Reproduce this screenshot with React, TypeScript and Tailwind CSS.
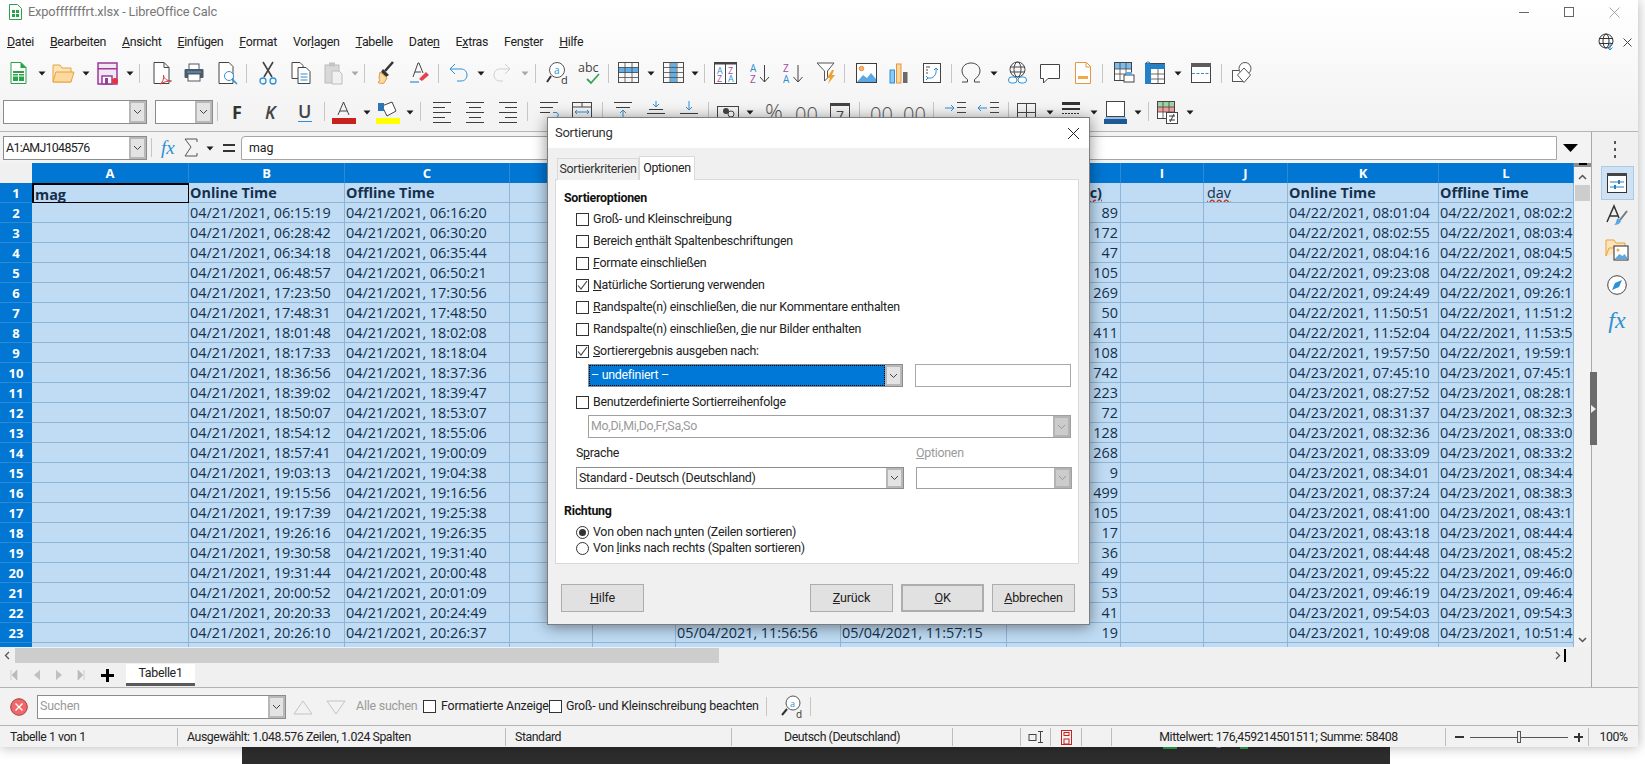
import React from "react";

const ui = "[font-family:'Roboto',sans-serif]";
const sheetFont = "[font-family:'Open_Sans',sans-serif]";

// Data of the sheet
const rows: [string, string, string, string, string][] = [
  ["04/21/2021, 06:15:19", "04/21/2021, 06:16:20", "89", "04/22/2021, 08:01:04", "04/22/2021, 08:02:25"],
  ["04/21/2021, 06:28:42", "04/21/2021, 06:30:20", "172", "04/22/2021, 08:02:55", "04/22/2021, 08:03:47"],
  ["04/21/2021, 06:34:18", "04/21/2021, 06:35:44", "47", "04/22/2021, 08:04:16", "04/22/2021, 08:04:53"],
  ["04/21/2021, 06:48:57", "04/21/2021, 06:50:21", "105", "04/22/2021, 09:23:08", "04/22/2021, 09:24:28"],
  ["04/21/2021, 17:23:50", "04/21/2021, 17:30:56", "269", "04/22/2021, 09:24:49", "04/22/2021, 09:26:11"],
  ["04/21/2021, 17:48:31", "04/21/2021, 17:48:50", "50", "04/22/2021, 11:50:51", "04/22/2021, 11:51:22"],
  ["04/21/2021, 18:01:48", "04/21/2021, 18:02:08", "411", "04/22/2021, 11:52:04", "04/22/2021, 11:53:50"],
  ["04/21/2021, 18:17:33", "04/21/2021, 18:18:04", "108", "04/22/2021, 19:57:50", "04/22/2021, 19:59:10"],
  ["04/21/2021, 18:36:56", "04/21/2021, 18:37:36", "742", "04/23/2021, 07:45:10", "04/23/2021, 07:45:19"],
  ["04/21/2021, 18:39:02", "04/21/2021, 18:39:47", "223", "04/23/2021, 08:27:52", "04/23/2021, 08:28:15"],
  ["04/21/2021, 18:50:07", "04/21/2021, 18:53:07", "72", "04/23/2021, 08:31:37", "04/23/2021, 08:32:30"],
  ["04/21/2021, 18:54:12", "04/21/2021, 18:55:06", "128", "04/23/2021, 08:32:36", "04/23/2021, 08:33:05"],
  ["04/21/2021, 18:57:41", "04/21/2021, 19:00:09", "268", "04/23/2021, 08:33:09", "04/23/2021, 08:33:20"],
  ["04/21/2021, 19:03:13", "04/21/2021, 19:04:38", "9", "04/23/2021, 08:34:01", "04/23/2021, 08:34:40"],
  ["04/21/2021, 19:15:56", "04/21/2021, 19:16:56", "499", "04/23/2021, 08:37:24", "04/23/2021, 08:38:30"],
  ["04/21/2021, 19:17:39", "04/21/2021, 19:25:38", "105", "04/23/2021, 08:41:00", "04/23/2021, 08:43:12"],
  ["04/21/2021, 19:26:16", "04/21/2021, 19:26:35", "17", "04/23/2021, 08:43:18", "04/23/2021, 08:44:40"],
  ["04/21/2021, 19:30:58", "04/21/2021, 19:31:40", "36", "04/23/2021, 08:44:48", "04/23/2021, 08:45:20"],
  ["04/21/2021, 19:31:44", "04/21/2021, 20:00:48", "49", "04/23/2021, 09:45:22", "04/23/2021, 09:46:00"],
  ["04/21/2021, 20:00:52", "04/21/2021, 20:01:09", "53", "04/23/2021, 09:46:19", "04/23/2021, 09:46:41"],
  ["04/21/2021, 20:20:33", "04/21/2021, 20:24:49", "41", "04/23/2021, 09:54:03", "04/23/2021, 09:54:30"],
  ["04/21/2021, 20:26:10", "04/21/2021, 20:26:37", "19", "04/23/2021, 10:49:08", "04/23/2021, 10:51:40"],
];

const colNames = ["A", "B", "C", "D", "E", "F", "G", "H", "I", "J", "K", "L"];
const cell =
  "border-r border-b border-[#8fb5d6] overflow-hidden whitespace-nowrap pl-[1px] text-[14.4px] leading-[19px] text-[#14304d]";

// Toolbar helpers
const Ic = ({ w, h = 24, c = "", children }: { w: number; h?: number; c?: string; children: React.ReactNode }) => (
  <svg width={w} height={h} viewBox={`0 0 ${w} ${h}`} fill="none" className={`shrink-0 overflow-visible ${c}`}>
    {children}
  </svg>
);
const Arrow = ({ c = "", light }: { c?: string; light?: boolean }) => (
  <Ic w={8} c={c}>
    <path d="M0.5 10.5h7L4 14.5z" fill={light ? "#a8a8a8" : "#1c1c1c"} />
  </Ic>
);
const Sep = ({ c = "" }: { c?: string }) => <span className={`w-px h-[19px] bg-[#c6c6c6] shrink-0 ${c}`} />;

const GridIcon = ({ band }: { band: "row" | "col" }) => (
  <>
    {band === "row" ? <rect x="1" y="6" width="20" height="6" fill="#62aee6" /> : <rect x="7.5" y="2" width="6" height="20" fill="#62aee6" />}
    <rect x="0.5" y="1.5" width="20" height="20" stroke="#4a4a4a" />
    <path d="M0.5 6.5h20M0.5 11.5h20M0.5 16.5h20M7 1.5v20M14 1.5v20" stroke="#4a4a4a" strokeWidth=".8" />
  </>
);

const Lines = ({ kind }: { kind: "l" | "c" | "r" }) => {
  const d = {
    l: "M0 2.5h18M0 7.5h12M0 12.5h18M0 17.5h12M0 22.5h18",
    c: "M0 2.5h18M3 7.5h12M0 12.5h18M3 17.5h12M0 22.5h18",
    r: "M0 2.5h18M6 7.5h12M0 12.5h18M6 17.5h12M0 22.5h18",
  }[kind];
  return <path d={d} stroke="#3d3d3d" />;
};

const Check = ({ on, c = "" }: { on?: boolean; c?: string }) => (
  <span className={`w-[13px] h-[13px] border border-[#333] bg-white flex items-center justify-center shrink-0 ${c}`}>
    {on && (
      <svg width="11" height="11" viewBox="0 0 11 11" fill="none">
        <path d="M1 5.5l3 3.5 6-8" stroke="#444" strokeWidth="1.1" />
      </svg>
    )}
  </span>
);

const Chevron = ({ color = "#444" }: { color?: string }) => (
  <svg width="9" height="6" viewBox="0 0 9 6" fill="none">
    <path d="M1 1l3.5 3.5L8 1" stroke={color} />
  </svg>
);

const Combo = ({
  width,
  height = "h-[23px]",
  text,
  textClass = "text-[#222]",
  disabled,
  focus,
  c = "",
}: {
  width: string;
  height?: string;
  text?: string;
  textClass?: string;
  disabled?: boolean;
  focus?: boolean;
  c?: string;
}) => (
  <div className={`flex shrink-0 border ${disabled ? "border-[#a0a0a0]" : "border-[#8c8c8c]"} ${focus ? "bg-[#0078d7]" : "bg-white"} ${width} ${height} ${c}`}>
    <div className={`flex-1 pl-[2px] flex items-center whitespace-nowrap overflow-hidden ${focus ? "text-white outline-1 outline-dotted outline-black -outline-offset-1" : textClass}`}>
      {text}
    </div>
    <div className={`w-[17px] flex items-center justify-center border-2 ${disabled ? "bg-[#cccccc] border-[#b4b4b4]" : "bg-[#e3e3e3] border-[#b8b8b8]"}`}>
      <Chevron color={disabled ? "#999" : "#444"} />
    </div>
  </div>
);

const Btn = ({ children, c = "" }: { children: React.ReactNode; c?: string }) => (
  <button className={`w-[83px] h-[28px] bg-[#e1e1e1] border border-[#adadad] text-[12.6px] tracking-[-0.2px] text-[#222] ${ui} ${c}`}>{children}</button>
);

function DialogOption({ on, children }: { on?: boolean; children: React.ReactNode }) {
  return (
    <div className="h-[22px] flex items-center ml-[20px]">
      <Check on={on} />
      <span className="ml-[4px] pt-[1px] text-[#222]">{children}</span>
    </div>
  );
}

const Radio = ({ on, children }: { on?: boolean; children: React.ReactNode }) => (
  <div className="h-[16px] flex items-center ml-[20px]">
    <span className="w-[13px] h-[13px] rounded-full border border-[#333] bg-white flex items-center justify-center shrink-0">
      {on && <span className="w-[7px] h-[7px] rounded-full bg-[#333]" />}
    </span>
    <span className="ml-[4px] pt-[1px] text-[#222]">{children}</span>
  </div>
);

const SortDialog = () => (
  <div className={`absolute left-[547px] top-[117px] z-20 w-[543px] h-[508px] border border-[#7d7d7d] bg-[#f0f0f0] shadow-[0_2px_14px_rgba(0,0,0,0.45)] flex flex-col text-[12.4px] tracking-[-0.27px] ${ui}`}>
    <div className="h-[30px] bg-white flex items-center justify-between shrink-0">
      <span className="ml-[7px] text-[13px] text-[#333]">Sortierung</span>
      <svg width="13" height="13" viewBox="0 0 13 13" fill="none" className="mr-[9px]">
        <path d="M1 1l11 11M12 1L1 12" stroke="#222" />
      </svg>
    </div>
    <div className="flex items-end ml-[9px] mt-[8px] h-[24px] shrink-0 relative z-10">
      <div className="w-[82px] h-[22px] bg-[#f0f0f0] border border-b-0 border-[#d9d9d9] flex items-center justify-center text-[#333]">Sortierkriterien</div>
      <div className="w-[56px] h-[24px] bg-white border border-b-0 border-[#d9d9d9] flex items-center justify-center text-[#222]">Optionen</div>
    </div>
    <div className="ml-[7px] w-[524px] h-[385px] -mt-px bg-white border border-[#d9d9d9] pl-[8px] pt-[8px] shrink-0">
      <div className="h-[20px] flex items-center font-bold text-[#111]">Sortieroptionen</div>
      <div className="-ml-[8px]">
        <DialogOption>Groß- und Kleinschrei<u>b</u>ung</DialogOption>
        <DialogOption>Bereich <u>e</u>nthält Spaltenbeschriftungen</DialogOption>
        <DialogOption><u>F</u>ormate einschließen</DialogOption>
        <DialogOption on><u>N</u>atürliche Sortierung verwenden</DialogOption>
        <DialogOption><u>R</u>andspalte(n) einschließen, die nur Kommentare enthalten</DialogOption>
        <DialogOption>Randspalte(n) einschließen, <u>d</u>ie nur Bilder enthalten</DialogOption>
        <DialogOption on><u>S</u>ortierergebnis ausgeben nach:</DialogOption>
      </div>
      <div className="flex mt-[2px] ml-[24px]">
        <Combo width="w-[315px]" text="– undefiniert –" focus />
        <div className="w-[156px] h-[23px] ml-[12px] border border-[#a9a9a9] bg-white" />
      </div>
      <div className="-ml-[8px] mt-[4px]">
        <DialogOption>Benutzerdefinierte Sortierreihenfolge</DialogOption>
      </div>
      <Combo width="w-[483px]" text="Mo,Di,Mi,Do,Fr,Sa,So" textClass="text-[#9a9a9a]" disabled c="mt-[2px] ml-[24px]" />
      <div className="flex mt-[6px] ml-[12px] h-[18px] items-center">
        <span className="w-[340px] text-[#222]">S<u>p</u>rache</span>
        <span className="text-[#9a9a9a]"><u>O</u>ptionen</span>
      </div>
      <div className="flex mt-[5px] ml-[12px]">
        <Combo width="w-[328px]" height="h-[22px]" text="Standard - Deutsch (Deutschland)" />
        <Combo width="w-[156px]" height="h-[22px]" disabled c="ml-[12px]" />
      </div>
      <div className="h-[18px] mt-[13px] flex items-center font-bold text-[#111]">Richtung</div>
      <div className="-ml-[8px] mt-[4px]">
        <Radio on>Von oben nach <u>u</u>nten (Zeilen sortieren)</Radio>
        <Radio>Von <u>l</u>inks nach rechts (Spalten sortieren)</Radio>
      </div>
    </div>
    <div className="flex mt-[20px] ml-[13px]">
      <Btn><u>H</u>ilfe</Btn>
      <Btn c="ml-[166px]"><u>Z</u>urück</Btn>
      <Btn c="ml-[8px] border-2 border-[#0078d7]"><u>O</u>K</Btn>
      <Btn c="ml-[8px]"><u>A</u>bbrechen</Btn>
    </div>
  </div>
);

const Toolbar1 = () => (
  <div className="h-[30px] flex items-center shrink-0">
    <Ic w={17} c="ml-[10px]">
      <path d="M1 1.5h10l5 5v16H1z" fill="#fff" stroke="#2aa14a" />
      <path d="M10.5 1v6h6z" fill="#2aa14a" />
      <rect x="3" y="10" width="11" height="10" fill="#2aa14a" />
      <path d="M3 15h11M8.5 12v8M3 12.5h11" stroke="#fff" />
    </Ic>
    <Arrow c="ml-[11px]" />
    <Ic w={23} c="ml-[6px]">
      <path d="M1 21V4h7l2 3h9v14z" fill="#fde3ba" stroke="#e8a33d" />
      <path d="M1 21l3-10h18l-3 10z" fill="#fdd9a0" stroke="#e8a33d" />
    </Ic>
    <Arrow c="ml-[7px]" />
    <Ic w={21} c="ml-[7px]">
      <path d="M1 2h19v21H1z" fill="#f3e6f3" stroke="#9b3a9b" strokeWidth="1.5" />
      <rect x="1" y="7" width="19" height="1.500" fill="#9b3a9b" />
      <path d="M5 23v-8h10v8z" stroke="#9b3a9b" strokeWidth="1.5" fill="#fff" />
      <rect x="8" y="17" width="3" height="6" fill="#9b3a9b" />
      <circle cx="18" cy="20" r="3" fill="#e8323c" />
    </Ic>
    <Arrow c="ml-[8px]" />
    <Sep c="ml-[5px]" />
    <Ic w={19} c="ml-[13px]">
      <path d="M1 1.500h10l5 5v16H1z" fill="#fff" stroke="#444" />
      <path d="M11 1.500v5h5" stroke="#444" />
      <path d="M7 23c3-2 4-5 3.500-9 0 3 3 6 8 6-4 0-8 1-11.500 3z" stroke="#d03c3c" />
    </Ic>
    <Ic w={20} c="ml-[12px]">
      <rect x="5" y="3" width="10" height="6" fill="#fff" stroke="#4d5b68" />
      <rect x="0.500" y="8" width="19" height="9" rx="1" fill="#4d5b68" />
      <rect x="4" y="13" width="12" height="7" fill="#fff" stroke="#4d5b68" />
      <path d="M3 11h14" stroke="#63a9e0" />
    </Ic>
    <Ic w={20} c="ml-[14px]">
      <path d="M1 1.500h10l4 4v17H1z" fill="#fff" stroke="#444" />
      <circle cx="11" cy="15" r="4.500" fill="#fff" stroke="#2d8fd5" />
      <path d="M14 18l5 5" stroke="#2d8fd5" strokeWidth="1.500" />
    </Ic>
    <Sep c="ml-[8px]" />
    <Ic w={18} c="ml-[12px]">
      <path d="M4 1l9 15M14 1L5 16" stroke="#444" strokeWidth="1.600" />
      <circle cx="4" cy="20" r="3" stroke="#2d8fd5" strokeWidth="1.300" />
      <circle cx="14" cy="20" r="3" stroke="#2d8fd5" strokeWidth="1.300" />
    </Ic>
    <Ic w={20} c="ml-[14px]">
      <path d="M1 1.500h8l3 3v13H1z" fill="#fff" stroke="#444" />
      <path d="M7 6.500h8l4 4v12H7z" fill="#fff" stroke="#444" />
      <path d="M9.500 13h7M9.500 16h7M9.500 19h7" stroke="#2d8fd5" />
    </Ic>
    <Ic w={19} c="ml-[13px]">
      <rect x="1" y="4" width="14" height="18" fill="#d8d8d8" stroke="#bcbcbc" />
      <rect x="5" y="1.500" width="6" height="4" fill="#c4c4c4" />
      <path d="M8 10h7l3 3v10H8z" fill="#f0f0f0" stroke="#bcbcbc" />
    </Ic>
    <Arrow light c="ml-[8px]" />
    <Sep c="ml-[5px]" />
    <Ic w={17} c="ml-[12px]">
      <path d="M16 1L8 10" stroke="#333" strokeWidth="2.500" />
      <path d="M6 8l6 6-3 2-5-5z" fill="#333" />
      <path d="M3 11l7 6-3 5c-3 1-6 0-6-1 2 0 2-2 1-4z" fill="#fbd9a4" stroke="#e8963d" />
    </Ic>
    <Ic w={19} c="ml-[16px]">
      <path d="M3 16L8 2h1l4 10M5 11h6" stroke="#444" />
      <path d="M9 18l7-7 3 3-7 6z" fill="#e6424d" />
      <path d="M0 21h9" stroke="#2d8fd5" strokeWidth="1.200" />
    </Ic>
    <Sep c="ml-[9px]" />
    <Ic w={19} c="ml-[10px]">
      <path d="M6 3L1 8l5 5" stroke="#2d8fd5" />
      <path d="M1 8h11c4 0 6 3 6 6s-2 6-6 6H8" stroke="#2d8fd5" />
    </Ic>
    <Arrow c="ml-[9px]" />
    <Ic w={18} c="ml-[8px]">
      <path d="M12 3l5 5-5 5" stroke="#cfcfcf" />
      <path d="M17 8H7c-4 0-6 3-6 6s2 6 6 6h3" stroke="#cfcfcf" />
    </Ic>
    <Arrow light c="ml-[10px]" />
    <Sep c="ml-[6px]" />
    <Ic w={22} c="ml-[10px]">
      <circle cx="11" cy="9" r="7.500" fill="#fff" stroke="#555" />
      <path d="M5 15L1 21" stroke="#333" strokeWidth="2" />
      <text x="8" y="12.500" fontSize="10" fill="#2d8fd5" fontFamily="Open Sans">a</text>
      <text x="15" y="23" fontSize="11" fill="#333" fontFamily="Open Sans">d</text>
    </Ic>
    <Ic w={22} c="ml-[10px]">
      <text x="0" y="11" fontSize="12.500" fill="#444" fontFamily="Open Sans">abc</text>
      <path d="M9 18l4 4 8-9" stroke="#3aa655" strokeWidth="1.800" />
    </Ic>
    <Sep c="ml-[8px]" />
    <Ic w={21} c="ml-[9px]"><GridIcon band="row" /></Ic>
    <Arrow c="ml-[8px]" />
    <Ic w={21} c="ml-[8px]"><GridIcon band="col" /></Ic>
    <Arrow c="ml-[7px]" />
    <Sep c="ml-[5px]" />
    <Ic w={23} c="ml-[9px]">
      <rect x="0.500" y="1.500" width="22" height="21" stroke="#444" fill="#fff" />
      <rect x="0.500" y="1" width="22" height="2.500" fill="#444" />
      <path d="M11.500 3v19" stroke="#444" />
      <text x="3" y="12.500" fontSize="9" fontFamily="Open Sans" fill="#2d8fd5">A</text>
      <text x="3" y="21" fontSize="9" fontFamily="Open Sans" fill="#a34ca3">Z</text>
      <text x="14" y="12.500" fontSize="9" fontFamily="Open Sans" fill="#a34ca3">Z</text>
      <text x="14" y="21" fontSize="9" fontFamily="Open Sans" fill="#2d8fd5">A</text>
    </Ic>
    <Ic w={21} c="ml-[12px]">
      <text x="1" y="11" fontSize="10" fontFamily="Open Sans" fill="#2d8fd5">A</text>
      <text x="1" y="22" fontSize="10" fontFamily="Open Sans" fill="#a34ca3">Z</text>
      <path d="M15.500 4v17M11 16l4.500 5 4.500-5" stroke="#444" />
    </Ic>
    <Ic w={22} c="ml-[12px]">
      <text x="1" y="11" fontSize="10" fontFamily="Open Sans" fill="#a34ca3">Z</text>
      <text x="1" y="22" fontSize="10" fontFamily="Open Sans" fill="#2d8fd5">A</text>
      <path d="M16 4v17M11.500 16l4.500 5 4.500-5" stroke="#444" />
    </Ic>
    <Ic w={20} c="ml-[12px]">
      <path d="M1 2h17l-6.500 8v7l-3 3v-10z" fill="#fff" stroke="#555" />
      <path d="M16 9l-5 8h3l-2 6 7-9h-3l2-5z" fill="#f0a030" />
    </Ic>
    <Sep c="ml-[8px]" />
    <Ic w={21} c="ml-[11px]">
      <rect x="0.500" y="2.500" width="20" height="19" stroke="#3d3d3d" fill="#fff" />
      <circle cx="5.500" cy="7.500" r="2.300" fill="#f6b26b" stroke="#e8963d" />
      <path d="M1 21l6-7 4 3 4-5 5 6v3z" fill="#5aa9e6" />
    </Ic>
    <Ic w={19} c="ml-[12px]">
      <rect x="1" y="9" width="4.500" height="13" fill="#8fc8f2" stroke="#2d8fd5" />
      <rect x="7.500" y="3" width="4.500" height="19" fill="#fcd7a0" stroke="#e8963d" />
      <rect x="14" y="11" width="4.500" height="11" fill="#6a6a6a" />
    </Ic>
    <Ic w={18} c="ml-[15px]">
      <rect x="0.500" y="2.500" width="17" height="19" stroke="#444" fill="#fff" />
      <path d="M3 6h4M3 9h2M3 12h2" stroke="#888" strokeWidth="1.500" />
      <path d="M5 17c5 1 9-3 8-9M11 9l2-2 2 2M3 15l2 2-2 2" stroke="#2d8fd5" />
    </Ic>
    <Sep c="ml-[10px]" />
    <Ic w={20} c="ml-[9px]">
      <path d="M1 21h5.500v-2.500C3 16 1 13 1 10c0-5 4-8 9-8s9 3 9 8c0 3-2 6-5.500 8.500V21H19" stroke="#444" />
    </Ic>
    <Arrow c="ml-[9px]" />
    <Ic w={21} c="ml-[9px]">
      <circle cx="10.500" cy="8.500" r="7.500" stroke="#444" />
      <ellipse cx="10.500" cy="8.500" rx="3.500" ry="7.500" stroke="#444" />
      <path d="M3 6h15M3 11h15" stroke="#444" />
      <rect x="1.500" y="16" width="8.500" height="6" rx="3" fill="#fff" stroke="#2d8fd5" />
      <rect x="11" y="16" width="8.500" height="6" rx="3" fill="#fff" stroke="#2d8fd5" />
    </Ic>
    <Ic w={20} c="ml-[12px]">
      <path d="M0.500 3.500h19v14H8L3.500 22v-4.500h-3z" fill="#fff" stroke="#444" />
    </Ic>
    <Ic w={16} c="ml-[15px]">
      <path d="M0.500 1.500h11l4 4v17H.500z" fill="#fff" stroke="#e8963d" />
      <path d="M11 1.500v4.500h4.500" stroke="#e8963d" />
      <rect x="3" y="15" width="10" height="3" fill="#f0a94d" />
    </Ic>
    <Sep c="ml-[11px]" />
    <Ic w={21} c="ml-[11px]">
      <rect x="0.500" y="1.500" width="17" height="18" fill="#fff" stroke="#444" />
      <rect x="1" y="2" width="16" height="6" fill="#7dbbe9" />
      <path d="M.5 8h17M.5 13h17M6 2v18M12 2v18" stroke="#444" strokeWidth=".8" />
      <rect x="10" y="14" width="10" height="7" fill="#fff" stroke="#444" />
      <rect x="12" y="11" width="6" height="3" fill="#5aa9e6" />
    </Ic>
    <Ic w={20} c="ml-[10px]">
      <rect x="0.500" y="2.500" width="19" height="20" fill="#fff" stroke="#444" />
      <rect x="0" y="3" width="6" height="20" fill="#2680c6" />
      <rect x="6" y="3" width="14" height="5" fill="#2680c6" />
      <path d="M6 13h14M6 18h14M13 8v15" stroke="#444" strokeWidth=".8" />
      <path d="M3 0v6M0 3h6M1 1l4 4M5 1L1 5" stroke="#2680c6" />
    </Ic>
    <Arrow c="ml-[9px]" />
    <Ic w={20} c="ml-[9px]">
      <rect x="0.500" y="2.500" width="19" height="19" fill="#fff" stroke="#444" />
      <rect x="0" y="2" width="20" height="4" fill="#5c5c5c" />
      <path d="M1 12.500h18" stroke="#2d8fd5" strokeDasharray="3 1.500" />
    </Ic>
    <Sep c="ml-[10px]" />
    <Ic w={20} c="ml-[10px]">
      <rect x="0.500" y="9.500" width="11" height="11" stroke="#555" fill="#fff" />
      <circle cx="13" cy="7.500" r="6" stroke="#555" fill="#fff" />
      <path d="M12 7l6.500 7-6.500 7.500-6.500-7.500z" stroke="#555" fill="#fff" />
    </Ic>
  </div>
);

const Toolbar2 = () => (
  <div className="h-[44px] flex items-start pt-[12px] border-b border-[#b4b4b4] shrink-0">
    <Combo width="w-[144px]" c="ml-[3px] h-[24px]" />
    <Combo width="w-[58px]" c="ml-[8px] h-[24px]" />
    <Sep c="ml-[4px] mt-[2px]" />
    <span className={`w-[12px] ml-[14px] text-[18px] leading-[24px] font-bold text-[#333] ${sheetFont}`}>F</span>
    <span className={`w-[12px] ml-[21px] text-[18px] leading-[24px] italic font-semibold text-[#444] ${sheetFont}`}>K</span>
    <span className={`w-[14px] ml-[21px] text-[18px] leading-[22px] font-semibold text-[#444] border-b border-[#2d8fd5] h-[22px] ${sheetFont}`}>U</span>
    <Sep c="ml-[12px] mt-[2px]" />
    <Ic w={25} c="ml-[6px]">
      <path d="M7 15l5.500-13L18 15M9 11h7" stroke="#444" />
      <rect x="1" y="18" width="24" height="6" fill="#c9211e" />
    </Ic>
    <Arrow c="ml-[7px]" />
    <Ic w={24} c="ml-[5px]">
      <path d="M6 6l10-4 4 9-9 5z" fill="#fff" stroke="#444" />
      <path d="M2 3h6v8H2z" fill="#2d75b5" />
      <rect x="0" y="18" width="24" height="6" fill="#ffff00" />
    </Ic>
    <Arrow c="ml-[6px]" />
    <Sep c="ml-[6px] mt-[2px]" />
    <Ic w={18} c="ml-[12px]"><Lines kind="l" /></Ic>
    <Ic w={18} c="ml-[15px]"><Lines kind="c" /></Ic>
    <Ic w={18} c="ml-[15px]"><Lines kind="r" /></Ic>
    <Sep c="ml-[10px] mt-[2px]" />
    <Ic w={20} c="ml-[12px]">
      <path d="M0 2.500h18M0 7.500h13M0 12.500h10" stroke="#3d3d3d" />
      <path d="M13 12.500h3c3 0 3 5 0 5h-2" stroke="#2d8fd5" />
    </Ic>
    <Ic w={20} c="ml-[12px]">
      <rect x=".5" y="2.500" width="19" height="16" stroke="#444" />
      <path d="M.5 7h19M10 2.500V7" stroke="#444" />
      <path d="M3 12h14M3 12l2-2M3 12l2 2M17 12l-2-2M17 12l-2 2" stroke="#2d8fd5" />
    </Ic>
    <Sep c="ml-[10px] mt-[2px]" />
    <Ic w={18} c="ml-[11px]">
      <path d="M0 2.500h18M2 7.500h14" stroke="#3d3d3d" />
      <path d="M9 10v8M6 13l3-3 3 3" stroke="#2d8fd5" />
    </Ic>
    <Ic w={18} c="ml-[15px]">
      <path d="M9 1v6M6 4l3 3 3-3" stroke="#2d8fd5" />
      <path d="M2 9.500h14M0 13.500h18" stroke="#3d3d3d" />
    </Ic>
    <Ic w={18} c="ml-[15px]">
      <path d="M9 1v9M6 7l3 3 3-3" stroke="#2d8fd5" />
      <path d="M0 13.500h18" stroke="#3d3d3d" />
    </Ic>
    <Sep c="ml-[10px] mt-[2px]" />
    <Ic w={22} c="ml-[8px]">
      <rect x=".5" y="6.500" width="21" height="15" stroke="#444" />
      <circle cx="9" cy="11" r="3" fill="#444" />
      <circle cx="14" cy="14" r="3" fill="#fff" stroke="#444" />
    </Ic>
    <Arrow c="ml-[7px]" />
    <Ic w={16} c="ml-[12px]">
      <text x="-1" y="20" fontSize="22" fontWeight="300" fill="#555" fontFamily="Open Sans">%</text>
    </Ic>
    <Ic w={22} c="ml-[14px]">
      <text x="-1" y="22" fontSize="20" fontWeight="300" fill="#555" fontFamily="Open Sans">00</text>
    </Ic>
    <Ic w={20} c="ml-[12px]">
      <rect x=".5" y="3.500" width="19" height="19" stroke="#444" />
      <rect x="0" y="3" width="20" height="3" fill="#444" />
      <text x="6" y="21" fontSize="14" fill="#444" fontFamily="Open Sans">7</text>
    </Ic>
    <Sep c="ml-[9px] mt-[2px]" />
    <Ic w={21} c="ml-[11px]">
      <text x="-1" y="22" fontSize="20" fontWeight="300" fill="#555" fontFamily="Open Sans">00</text>
    </Ic>
    <Ic w={21} c="ml-[12px]">
      <text x="-1" y="22" fontSize="20" fontWeight="300" fill="#555" fontFamily="Open Sans">00</text>
    </Ic>
    <Sep c="ml-[8px] mt-[2px]" />
    <Ic w={21} c="ml-[11px]">
      <path d="M0 8h9M6 5l3 3-3 3" stroke="#2d8fd5" />
      <path d="M12 2.500h9M12 7.500h9M12 12.500h9M12 17.500h9" stroke="#444" />
    </Ic>
    <Ic w={22} c="ml-[11px]">
      <path d="M10 8H1M4 5L1 8l3 3" stroke="#2d8fd5" />
      <path d="M13 2.500h9M13 7.500h9M13 12.500h9M13 17.500h9" stroke="#444" />
    </Ic>
    <Sep c="ml-[9px] mt-[2px]" />
    <Ic w={19} c="ml-[8px]">
      <rect x=".5" y="3.500" width="18" height="18" stroke="#444" />
      <path d="M9.500 3.500v18M.5 12.500h18" stroke="#444" />
    </Ic>
    <Arrow c="ml-[10px]" />
    <Ic w={18} c="ml-[8px]">
      <rect x="0" y="2" width="18" height="3" fill="#333" />
      <rect x="0" y="8" width="18" height="2" fill="#333" />
      <path d="M0 13.500h18M0 17.500h18" stroke="#333" strokeDasharray="2 1" />
    </Ic>
    <Arrow c="ml-[10px]" />
    <Ic w={23} c="ml-[6px]">
      <rect x="2.500" y="1.500" width="18" height="15" stroke="#444" fill="#fff" />
      <path d="M1 18h21" stroke="#2d8fd5" />
      <rect x="0" y="19" width="23" height="5" fill="#1f5a96" />
    </Ic>
    <Arrow c="ml-[7px]" />
    <Sep c="ml-[6px] mt-[2px]" />
    <Ic w={21} c="ml-[8px]">
      <rect x=".5" y="1.500" width="17" height="17" fill="#fff" stroke="#444" />
      <rect x="1" y="2" width="16" height="5" fill="#9fd3a3" />
      <rect x="1" y="7" width="16" height="5" fill="#f19b9b" />
      <path d="M.5 7h17M.5 12h17M6 2v17M12 2v17" stroke="#444" strokeWidth=".8" />
      <rect x="9.500" y="12.500" width="11" height="11" fill="#fff" stroke="#444" />
      <path d="M12 16h6M12 20h6M17 14l-4 8" stroke="#333" />
    </Ic>
    <Arrow c="ml-[8px]" />
  </div>
);

const FormulaBar = () => (
  <div className="h-[31px] flex items-center shrink-0 bg-[#f3f3f3]">
    <div className={`ml-[3px] w-[144px] h-[24px] shrink-0 flex border border-[#8c8c8c] bg-white ${ui}`}>
      <div className="flex-1 pl-[2px] pt-[1px] flex items-center text-[12.4px] tracking-[-0.7px] text-[#222]">A1:AMJ1048576</div>
      <div className="w-[17px] flex items-center justify-center bg-[#e3e3e3] border-2 border-[#b8b8b8]"><Chevron /></div>
    </div>
    <Sep c="ml-[4px]" />
    <span className="ml-[9px] w-[15px] text-[19px] italic leading-none text-[#2d8fd5] [font-family:'Liberation_Serif',serif] shrink-0">fx</span>
    <Ic w={14} h={20} c="ml-[8px]">
      <path d="M13 4V1H1l6 8-6 9h12v-3" stroke="#555" />
    </Ic>
    <Arrow c="ml-[8px]" />
    <span className="ml-[9px] w-[12px] h-[8px] border-y-2 border-[#333] shrink-0" />
    <div className={`ml-[6px] w-[1316px] h-[24px] shrink-0 border border-[#a6a6a6] rounded-tl-sm bg-white pl-[7px] pt-[1px] flex items-center text-[12.4px] text-[#222] ${ui}`}>mag</div>
    <svg width="15" height="8" viewBox="0 0 15 8" className="ml-[6px] shrink-0">
      <path d="M0 0h15L7.500 8z" fill="#000" />
    </svg>
  </div>
);

const SheetGrid = () => (
  <div className={`w-[1574px] h-[484px] overflow-hidden grid grid-cols-[32px_157px_156px_165px_83px_83px_165px_166px_114px_83px_84px_151px_135px] auto-rows-[20px] shrink-0 ${sheetFont}`}>
    <div className="bg-[#f0f0f0]" />
    {colNames.map((n) => (
      <div key={n} className="bg-[#0176d3] border-r border-[#2a8ad8] text-white font-bold text-[13px] leading-[20px] text-center">{n}</div>
    ))}
    <div className="bg-[#0176d3] text-white font-bold text-[13px] leading-[20px] text-center border-b border-[#2a8ad8]">1</div>
    <div className={`${cell} bg-[#bfdcf4] font-bold text-[#111] border-2 border-black`}>mag</div>
    <div className={`${cell} bg-[#bfdcf4] font-bold`}>Online Time</div>
    <div className={`${cell} bg-[#bfdcf4] font-bold`}>Offline Time</div>
    <div className={`${cell} bg-[#bfdcf4]`} />
    <div className={`${cell} bg-[#bfdcf4]`} />
    <div className={`${cell} bg-[#bfdcf4] font-bold`}>Online Time</div>
    <div className={`${cell} bg-[#bfdcf4] font-bold`}>Offline Time</div>
    <div className={`${cell} bg-[#bfdcf4] font-bold`}><span className="-ml-[7px]">Duration <span className="underline decoration-wavy decoration-[#c0392b]">(sec)</span></span></div>
    <div className={`${cell} bg-[#bfdcf4]`} />
    <div className={`${cell} bg-[#bfdcf4] text-[13px]`}><span className="underline decoration-wavy decoration-[#c0392b] ml-[2px]">dav</span></div>
    <div className={`${cell} bg-[#bfdcf4] font-bold`}>Online Time</div>
    <div className={`${cell} bg-[#bfdcf4] font-bold`}>Offline Time</div>
    {rows.map((r, i) => (
      <React.Fragment key={i}>
        <div className="bg-[#0176d3] text-white font-bold text-[13px] leading-[20px] text-center border-b border-[#2a8ad8]">{i + 2}</div>
        <div className={`${cell} bg-[#bfdcf4]`} />
        <div className={`${cell} bg-[#bfdcf4]`}>{r[0]}</div>
        <div className={`${cell} bg-[#bfdcf4]`}>{r[1]}</div>
        <div className={`${cell} bg-[#bfdcf4]`} />
        <div className={`${cell} bg-[#bfdcf4]`} />
        <div className={`${cell} bg-[#bfdcf4]`}>{i === 21 ? "05/04/2021, 11:56:56" : ""}</div>
        <div className={`${cell} bg-[#bfdcf4]`}>{i === 21 ? "05/04/2021, 11:57:15" : ""}</div>
        <div className={`${cell} bg-[#bfdcf4] text-right pr-[2px]`}>{r[2]}</div>
        <div className={`${cell} bg-[#bfdcf4]`} />
        <div className={`${cell} bg-[#bfdcf4]`} />
        <div className={`${cell} bg-[#bfdcf4]`}>{r[3]}</div>
        <div className={`${cell} bg-[#bfdcf4]`}>{r[4]}</div>
      </React.Fragment>
    ))}
    <div className="bg-[#0176d3]" />
    {colNames.map((n) => (
      <div key={n} className={`${cell} bg-[#bfdcf4]`} />
    ))}
  </div>
);

const VScroll = () => (
  <div className="w-[17px] h-[484px] bg-[#f3f3f3] flex flex-col items-center shrink-0">
    <div className="w-full h-[4px] bg-[#8c8c8c] flex justify-center shrink-0">
      <span className="w-[8px] h-[2px] bg-black" />
    </div>
    <svg width="9" height="6" viewBox="0 0 9 6" fill="none" className="mt-[7px] shrink-0">
      <path d="M1 5l3.500-3.500L8 5" stroke="#555" strokeWidth="1.500" />
    </svg>
    <div className="w-[15px] h-[16px] bg-[#cdcdcd] mt-[5px] shrink-0" />
    <svg width="9" height="6" viewBox="0 0 9 6" fill="none" className="mt-[436px] shrink-0">
      <path d="M1 1l3.500 3.500L8 1" stroke="#555" strokeWidth="1.500" />
    </svg>
  </div>
);

const Sidebar = () => (
  <div className="w-[47px] border-l border-[#a9a9a9] bg-[#f0f0f0] flex flex-col items-center shrink-0">
    <div className="mt-[9px] flex flex-col gap-[4px] shrink-0">
      <span className="w-[2px] h-[3px] bg-[#555]" />
      <span className="w-[2px] h-[3px] bg-[#555]" />
      <span className="w-[2px] h-[3px] bg-[#555]" />
    </div>
    <div className="mt-[8px] ml-[4px] w-[33px] h-[34px] bg-[#cfe2f3] border border-[#a8cbe9] flex items-center justify-center shrink-0">
      <Ic w={20} h={20}>
        <rect x=".5" y=".5" width="19" height="19" fill="#fff" stroke="#333" />
        <rect x="0" y="0" width="20" height="3" fill="#444" />
        <path d="M3 9h14M3 14h14" stroke="#2680c6" />
        <rect x="11" y="7" width="2" height="4" fill="#2680c6" />
        <rect x="7" y="12" width="2" height="4" fill="#2680c6" />
      </Ic>
    </div>
    <Ic w={22} h={24} c="mt-[4px] ml-[4px]">
      <path d="M1 18L8 2l5 12M3.500 12h8" stroke="#333" strokeWidth="1.500" />
      <path d="M21 7l-7 9" stroke="#777" strokeWidth="2" />
      <path d="M11 15c2-1 4 0 4 2-1 3-4 4-7 4 2-1 2-4 3-6z" fill="#5aa9e6" />
    </Ic>
    <Ic w={24} h={24} c="mt-[10px] ml-[4px]">
      <path d="M1 18V2h8l2 3h9v8" fill="#fde3ba" stroke="#e8a33d" />
      <path d="M1 18l3-8h8" stroke="#e8a33d" />
      <rect x="9" y="8" width="14" height="14" fill="#fff" stroke="#2b2b2b" />
      <circle cx="13" cy="12" r="1.500" fill="#f0a94d" />
      <path d="M9.500 21l5-5 3 2 2-2 3 4v1z" fill="#5aa9e6" />
    </Ic>
    <Ic w={20} h={20} c="mt-[13px] ml-[4px]">
      <circle cx="10" cy="10" r="9.300" fill="#fff" stroke="#444" />
      <path d="M15 5l-3 7-7 3 3-7z" fill="#2d8fd5" />
    </Ic>
    <span className="mt-[13px] ml-[4px] text-[24px] italic leading-none text-[#2d8fd5] [font-family:'Liberation_Serif',serif] shrink-0">fx</span>
  </div>
);

const TabRow = () => (
  <div className="h-[23px] flex items-start shrink-0">
    <div className="flex items-center h-[22px]">
      <Ic w={7} h={10} c="ml-[10px]"><path d="M1 0v10M7 0L2 5l5 5z" fill="#bbb" stroke="#bbb" strokeWidth=".6" /></Ic>
      <Ic w={6} h={10} c="ml-[17px]"><path d="M6 0L0 5l6 5z" fill="#c0c0c0" /></Ic>
      <Ic w={6} h={10} c="ml-[16px]"><path d="M0 0l6 5-6 5z" fill="#c0c0c0" /></Ic>
      <Ic w={7} h={10} c="ml-[16px]"><path d="M6 0v10M0 0l5 5-5 5z" fill="#bbb" stroke="#bbb" strokeWidth=".6" /></Ic>
      <span className="ml-[16px] w-[13px] h-[13px] shrink-0 bg-[linear-gradient(#000,#000),linear-gradient(#000,#000)] bg-[length:100%_3px,3px_100%] bg-center bg-no-repeat" />
    </div>
    <div className={`ml-[12px] w-[69px] h-[22px] bg-white border-b-[3px] border-[#5a5a5a] flex items-center justify-center text-[12.4px] tracking-[-0.3px] text-[#222] ${ui}`}>Tabelle1</div>
  </div>
);

const FindBar = () => (
  <div className={`h-[39px] flex items-center border-t border-b border-[#b4b4b4] shrink-0 text-[12.4px] tracking-[-0.2px] ${ui}`}>
    <Ic w={18} h={18} c="ml-[10px]">
      <circle cx="9" cy="9" r="8.300" fill="#ee6a6a" stroke="#b03a3a" />
      <path d="M5.500 5.500l7 7M12.500 5.500l-7 7" stroke="#fff" strokeWidth="1.400" />
    </Ic>
    <Combo width="w-[249px]" height="h-[24px]" text="Suchen" textClass="text-[#9a9a9a]" c="ml-[9px]" />
    <Ic w={20} h={16} c="ml-[7px]"><path d="M10 2l9 13H1z" stroke="#c4c4c4" /></Ic>
    <Ic w={20} h={16} c="ml-[13px]"><path d="M1 2h18l-9 13z" stroke="#c4c4c4" /></Ic>
    <span className="ml-[10px] text-[#9a9a9a] whitespace-nowrap w-[67px]">Alle suchen</span>
    <Check />
    <span className="ml-[5px] text-[#222] whitespace-nowrap w-[108px]">Formatierte Anzeige</span>
    <Check />
    <span className="ml-[4px] text-[#222] whitespace-nowrap w-[200px]">Groß- und Kleinschreibung beachten</span>
    <Sep />
    <Ic w={22} h={24} c="ml-[14px]">
      <circle cx="12" cy="8" r="7" fill="#fff" stroke="#555" />
      <path d="M6 14l-5 6" stroke="#333" strokeWidth="2" />
      <text x="9" y="11.500" fontSize="9" fill="#2d8fd5" fontFamily="Open Sans">a</text>
      <text x="15" y="23" fontSize="10" fill="#333" fontFamily="Open Sans">d</text>
    </Ic>
    <Sep c="ml-[7px]" />
  </div>
);

const StatusBar = () => (
  <div className={`h-[22px] flex items-center shrink-0 text-[12.3px] tracking-[-0.42px] text-[#222] whitespace-nowrap ${ui}`}>
    <div className="w-[178px] h-[18px] border-r border-[#bdbdbd] pl-[10px] pt-[1px] flex items-center">Tabelle 1 von 1</div>
    <div className="w-[328px] h-[18px] border-r border-[#bdbdbd] pl-[9px] pt-[1px] flex items-center">Ausgewählt: 1.048.576 Zeilen, 1.024 Spalten</div>
    <div className="w-[226px] h-[18px] border-r border-[#bdbdbd] pl-[9px] pt-[1px] flex items-center">Standard</div>
    <div className="w-[221px] h-[18px] border-r border-[#bdbdbd] pt-[1px] flex items-center justify-center">Deutsch (Deutschland)</div>
    <div className="w-[68px] h-[18px] border-r border-[#bdbdbd]" />
    <div className="w-[30px] h-[18px] border-r border-[#bdbdbd] flex items-center justify-center">
      <Ic w={16} h={14}>
        <rect x="1" y="4.500" width="7" height="6" stroke="#444" />
        <path d="M10 1.500h5M10 12.500h5M12.500 1.500v11" stroke="#444" />
      </Ic>
    </div>
    <div className="w-[31px] h-[18px] border-r border-[#bdbdbd] flex items-center justify-center">
      <Ic w={11} h={15}>
        <rect x=".5" y=".5" width="10" height="14" stroke="#c9211e" />
        <rect x="3" y="2.500" width="5" height="3" stroke="#c9211e" />
        <rect x="3" y="9" width="5" height="5" stroke="#c9211e" />
      </Ic>
    </div>
    <div className="w-[30px] h-[18px] border-r border-[#bdbdbd]" />
    <div className="w-[334px] h-[18px] border-r border-[#bdbdbd] pt-[1px] flex items-center justify-center">Mittelwert: 176,459214501511; Summe: 58408</div>
    <div className="w-[143px] h-[18px] border-r border-[#bdbdbd] flex items-center">
      <span className="ml-[9px] w-[9px] h-[2px] bg-[#333] shrink-0" />
      <div className="ml-[6px] w-[98px] h-px bg-[#555] flex items-center justify-center shrink-0">
        <span className="w-[4px] h-[12px] bg-[#eee] border border-[#555]" />
      </div>
      <span className="ml-[6px] w-[9px] h-[9px] shrink-0 bg-[linear-gradient(#333,#333),linear-gradient(#333,#333)] bg-[length:100%_2px,2px_100%] bg-center bg-no-repeat" />
    </div>
    <div className="w-[49px] h-[18px] pt-[1px] flex items-center justify-center">100%</div>
  </div>
);

export default function App() {
  return (
    <div className={`relative w-[1645px] h-[764px] overflow-hidden bg-white ${ui}`}>
      <div className="relative z-10 w-[1638px] h-[747px] flex flex-col shadow-[0_0_12px_rgba(0,0,0,0.3)] bg-linear-to-b from-white to-[#f2f2f2] to-[132px]">
        {/* Title bar */}
        <div className="h-[24px] flex items-center shrink-0">
          <Ic w={13} h={16} c="ml-[9px]">
            <path d="M.5.5h8l4 4v11H.5z" fill="#fff" stroke="#2aa14a" />
            <rect x="3" y="6" width="7" height="7" fill="#2aa14a" />
            <path d="M3 9.500h7M6.500 6v7" stroke="#fff" />
          </Ic>
          <span className="ml-[6px] text-[12.8px] tracking-[-0.15px] text-[#777] whitespace-nowrap">Expofffffffrt.xlsx - LibreOffice Calc</span>
          <div className="ml-auto flex items-center shrink-0">
            <span className="w-[10px] h-px bg-[#666]" />
            <span className="ml-[35px] w-[10px] h-[10px] border border-[#666]" />
            <svg width="11" height="11" viewBox="0 0 11 11" fill="none" className="ml-[35px] mr-[18px]">
              <path d="M.5.5l10 10M10.500.5l-10 10" stroke="#aaa" />
            </svg>
          </div>
        </div>
        {/* Menu bar */}
        <div className="h-[34px] flex items-center gap-[16px] pl-[7px] pt-[2px] text-[12.4px] tracking-[-0.32px] text-[#222] whitespace-nowrap shrink-0">
          <span><u>D</u>atei</span>
          <span><u>B</u>earbeiten</span>
          <span><u>A</u>nsicht</span>
          <span><u>E</u>infügen</span>
          <span><u>F</u>ormat</span>
          <span>Vor<u>l</u>agen</span>
          <span><u>T</u>abelle</span>
          <span>Date<u>n</u></span>
          <span>E<u>x</u>tras</span>
          <span>Fen<u>s</u>ter</span>
          <span><u>H</u>ilfe</span>
          <div className="ml-auto flex items-center mr-[6px]">
            <Ic w={17} h={18}>
              <circle cx="8" cy="8" r="7" stroke="#333" />
              <ellipse cx="8" cy="8" rx="3" ry="7" stroke="#333" />
              <path d="M1 5.500h14M1 10.500h14" stroke="#333" />
              <path d="M12 9v8M9.500 14.500l2.500 2.500 2.500-2.500" stroke="#2d8fd5" />
            </Ic>
            <svg width="9" height="9" viewBox="0 0 9 9" fill="none" className="ml-[8px]">
              <path d="M.5.5l8 8M8.500.5l-8 8" stroke="#444" />
            </svg>
          </div>
        </div>
        <Toolbar1 />
        <Toolbar2 />
        {/* Work area with sidebar */}
        <div className="relative h-[555px] flex shrink-0">
          <div className="w-[1591px] flex flex-col bg-[#f0f0f0] shrink-0">
            <FormulaBar />
            <div className="flex shrink-0">
              <SheetGrid />
              <VScroll />
            </div>
            <div className="h-[17px] flex items-center shrink-0">
              <svg width="6" height="9" viewBox="0 0 6 9" fill="none" className="ml-[4px] shrink-0">
                <path d="M5 1L1.500 4.500 5 8" stroke="#555" strokeWidth="1.300" />
              </svg>
              <div className="ml-[5px] w-[704px] h-[15px] bg-[#cdcdcd] shrink-0" />
              <svg width="6" height="9" viewBox="0 0 6 9" fill="none" className="ml-[836px] shrink-0">
                <path d="M1 1l3.500 3.500L1 8" stroke="#555" strokeWidth="1.300" />
              </svg>
              <span className="ml-[3px] w-[2px] h-[13px] bg-black shrink-0" />
            </div>
            <TabRow />
          </div>
          <Sidebar />
          <div className="absolute left-[1590px] top-[240px] w-[7px] h-[73px] bg-[#6b6b6b] flex items-center justify-center">
            <svg width="5" height="8" viewBox="0 0 5 8"><path d="M0 0l5 4-5 4z" fill="#eee" /></svg>
          </div>
        </div>
        <FindBar />
        <StatusBar />
        <SortDialog />
      </div>
      {/* Page behind the window */}
      <div className={`ml-[242px] w-[1148px] h-[17px] bg-[#2d2d2d] overflow-hidden text-[12px] text-[#8a8a8a] flex ${sheetFont}`}>
        <span className="ml-[14px] w-[150px] -mt-[15px] whitespace-nowrap">Das aktuellste Forum</span>
        <span className="ml-[757px] w-[14px] h-[2px] bg-[#2aa14a]" />
        <span className="w-[58px] -mt-[15px] whitespace-nowrap">Nothing</span>
        <span className="ml-[5px] w-[8px] h-[2px] bg-[#2aa14a]" />
        <span className="-mt-[15px] whitespace-nowrap">Alle Cookies zulassen</span>
      </div>
    </div>
  );
}
